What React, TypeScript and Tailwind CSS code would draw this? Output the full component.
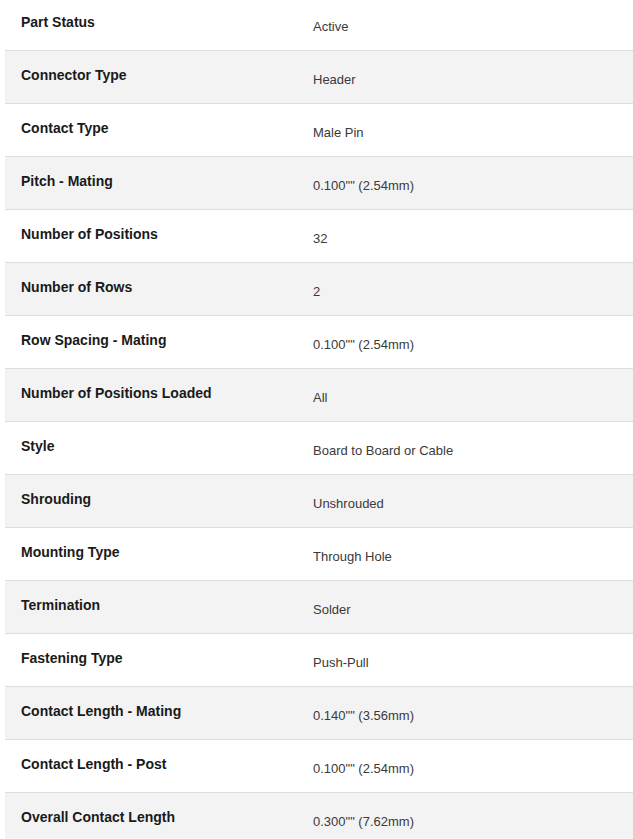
import React from "react";

const rows: [string, string][] = [
  ["Part Status", "Active"],
  ["Connector Type", "Header"],
  ["Contact Type", "Male Pin"],
  ["Pitch - Mating", '0.100"" (2.54mm)'],
  ["Number of Positions", "32"],
  ["Number of Rows", "2"],
  ["Row Spacing - Mating", '0.100"" (2.54mm)'],
  ["Number of Positions Loaded", "All"],
  ["Style", "Board to Board or Cable"],
  ["Shrouding", "Unshrouded"],
  ["Mounting Type", "Through Hole"],
  ["Termination", "Solder"],
  ["Fastening Type", "Push-Pull"],
  ["Contact Length - Mating", '0.140"" (3.56mm)'],
  ["Contact Length - Post", '0.100"" (2.54mm)'],
  ["Overall Contact Length", '0.300"" (7.62mm)'],
];

export default function App() {
  return (
    <div className="h-[839px] overflow-hidden bg-white pl-[5px]" style={{ fontFamily: '"Liberation Sans", Arial, sans-serif' }}>
      <div className="mt-[-2px]">
        {rows.map(([k, v], i) => (
          <div
            key={k}
            className={`flex h-[53px] border-b border-[#dedede] ${i % 2 === 1 ? "bg-[#f3f3f3]" : "bg-white"}`}
          >
            <div className="w-[292px] shrink-0 pl-4 pt-[15px] text-[14px] font-bold leading-[18px] text-[#1a1a1a]">{k}</div>
            <div className="flex-1 pl-4 pt-[21px] text-[13px] leading-[16px] text-[#3a3a3a]">{v}</div>
          </div>
        ))}
      </div>
    </div>
  );
}
